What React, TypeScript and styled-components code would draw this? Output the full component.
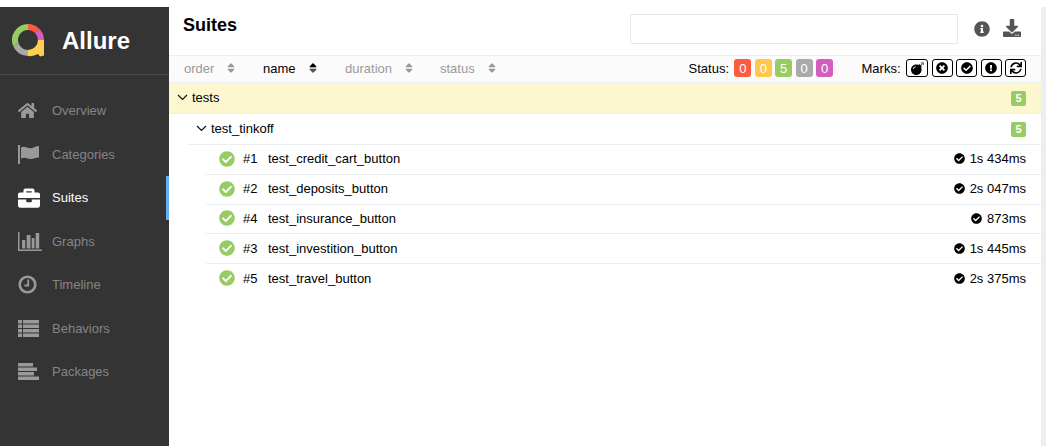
import React from 'react'
import styled, { createGlobalStyle } from 'styled-components'
import {
  FaHome,
  FaBriefcase,
  FaInfoCircle,
  FaDownload,
  FaBomb,
  FaTimesCircle,
  FaCheckCircle,
  FaExclamationCircle,
  FaSync,
  FaSort,
  FaSortUp,
  FaSortDown,
} from 'react-icons/fa'

const GlobalStyle = createGlobalStyle`
  html, body {
    margin: 0;
    padding: 0;
    height: 100%;
    background: #fff;
    overflow: hidden;
  }
  #root {
    height: 100%;
  }
  * {
    box-sizing: border-box;
  }
`

const Page = styled.div`
  display: flex;
  height: 446px;
  padding-top: 7px;
  font-family: 'Liberation Sans', Arial, sans-serif;
  font-size: 13px;
  color: #000;
`

const Side = styled.aside`
  width: 169px;
  flex: none;
  background: #343434;
  display: flex;
  flex-direction: column;
`

const Brand = styled.div`
  height: 68px;
  display: flex;
  align-items: center;
  padding-left: 12px;
  gap: 18px;
  border-bottom: 1px solid #4a4a4a;
  color: #fff;
  font-size: 24px;
  font-weight: 700;
`

const Menu = styled.nav`
  display: flex;
  flex-direction: column;
  padding-top: 14px;
`

const MenuItem = styled.div<{ $active?: boolean }>`
  height: 43.5px;
  display: flex;
  align-items: center;
  padding-left: 18px;
  color: ${(p) => (p.$active ? '#fff' : '#999')};
  border-right: 3px solid ${(p) => (p.$active ? '#63b0f0' : 'transparent')};
  svg {
    display: block;
  }
`

const MenuIcon = styled.span`
  width: 34px;
  height: 24px;
  flex: none;
  display: flex;
  align-items: center;
`

const MenuLabel = styled.span<{ $active?: boolean }>`
  color: ${(p) => (p.$active ? '#fff' : '#858585')};
`

const Main = styled.main`
  flex: 1;
  min-width: 0;
  display: flex;
  flex-direction: column;
`

const Header = styled.header`
  height: 48px;
  display: flex;
  align-items: flex-start;
  padding-left: 14px;
`

const Title = styled.h2`
  margin: 0;
  font-size: 18px;
  font-weight: 700;
  line-height: 36px;
  flex: 1;
`

const Search = styled.input`
  width: 328px;
  height: 30px;
  margin-top: 7px;
  border: 1px solid #e6e8ea;
  background: #fff;
  outline: none;
`

const HeaderIcons = styled.div`
  display: flex;
  align-items: center;
  gap: 13px;
  height: 27px;
  margin: 8px 20px 0 16px;
  color: #555;
  svg:last-child {
    margin-top: -2px;
  }
`

const SortBar = styled.div`
  height: 28px;
  display: flex;
  align-items: center;
  background: #fbfbfb;
  border-top: 1px solid #eceff1;
  border-bottom: 1px solid #eceff1;
  padding: 0 0 2px 15px;
`

const SortItem = styled.div<{ $active?: boolean; $width: number }>`
  width: ${(p) => p.$width}px;
  flex: none;
  display: flex;
  align-items: center;
  gap: 13px;
  color: ${(p) => (p.$active ? '#000' : '#999')};
`

const SortArrows = styled.span`
  position: relative;
  width: 8px;
  height: 12px;
  color: #999;
  svg {
    position: absolute;
    inset: 0;
    width: 100%;
    height: 100%;
  }
`

const Counts = styled.div`
  margin-left: auto;
  display: flex;
  align-items: center;
  gap: 3.4px;
`

const CountsLabel = styled.span`
  margin-right: 2px;
`

const Badge = styled.span<{ $color: string }>`
  width: 17px;
  height: 18px;
  border-radius: 3px;
  background: ${(p) => p.$color};
  color: #fff;
  display: flex;
  align-items: center;
  justify-content: center;
`

const Marks = styled.div`
  display: flex;
  align-items: center;
  gap: 3.5px;
  margin-left: 28.5px;
  margin-right: 15px;
`

const Mark = styled.span<{ $wide?: boolean }>`
  width: ${(p) => (p.$wide ? 22 : 21)}px;
  height: 18px;
  border: 1px solid #000;
  border-radius: 3px;
  background: #fff;
  display: flex;
  align-items: center;
  justify-content: center;
`

const GroupRow = styled.div<{ $selected?: boolean; $indent: number }>`
  height: 31px;
  display: flex;
  align-items: center;
  padding-left: 8px;
  padding-right: 15px;
  margin-left: ${(p) => p.$indent}px;
  background: ${(p) => (p.$selected ? '#fdf7cf' : '#fff')};
  border-bottom: 1px solid #eceff1;
  gap: 4px;
`

const GroupName = styled.span`
  flex: 1;
  margin-bottom: 2px;
`

const Chevron = styled.svg`
  width: 11px;
  height: 7px;
  flex: none;
  margin-bottom: 1px;
`

const CountBadge = styled.span`
  width: 15px;
  height: 15px;
  border-radius: 2px;
  background: #97cc64;
  color: #fff;
  font-size: 11px;
  font-weight: 700;
  display: flex;
  align-items: center;
  justify-content: center;
`

const TestList = styled.div`
  margin-left: 37px;
  display: flex;
  flex-direction: column;
`

const TestRow = styled.div`
  height: 29.75px;
  display: flex;
  align-items: center;
  padding: 0 15px 1px 13px;
  border-bottom: 1px solid #eceff1;
  &:last-child {
    border-bottom: none;
  }
`

const TestOrder = styled.span`
  margin-left: 8px;
  width: 25px;
`

const TestName = styled.span`
  flex: 1;
`

const Duration = styled.span`
  display: flex;
  align-items: center;
  gap: 5px;
`

const Rail = styled.div`
  width: 5px;
  flex: none;
  background: #eceff1;
`

const Logo = () => (
  <svg width="32" height="33" viewBox="0 0 32 33" fill="none">
    <path d="M16 3 A13 13 0 0 0 3.9 20.7" stroke="#97cc64" strokeWidth="6" />
    <path d="M3.9 20.7 A13 13 0 0 0 16 29" stroke="#aaa" strokeWidth="6" />
    <path d="M16 3 A13 13 0 0 1 25.2 6.8" stroke="#fd5a3e" strokeWidth="6" />
    <path d="M25.2 6.8 A13 13 0 0 1 29 16" stroke="#d35ebe" strokeWidth="6" />
    <path
      d="M16 26 A10 10 0 0 0 26 16 L32 16 L32 31.5 L28 32.5 L26 30 A16 16 0 0 1 16 32 Z"
      fill="#ffd050"
    />
  </svg>
)

const CategoryFlag = () => (
  <svg width="21" height="19" viewBox="0 0 21 19" fill="#999">
    <rect x="0" y="0" width="2" height="19" />
    <path d="M3 2.5 C7 0 10 4.5 14 3 C16 2.3 18 1 21 1 L21 12.5 C17 12.5 15 14.5 12 14 C9 13.5 7 11.5 3 13.5 Z" />
  </svg>
)

const GraphIcon = () => (
  <svg width="24" height="19" viewBox="0 0 24 19" fill="#999">
    <rect x="0" y="0" width="1.5" height="19" />
    <rect x="0" y="17.5" width="24" height="1.5" />
    <rect x="4" y="8" width="3.3" height="8.5" />
    <rect x="8.7" y="3" width="3.8" height="13.5" />
    <rect x="13.7" y="6" width="2.8" height="10.5" />
    <rect x="17.7" y="1" width="3.5" height="15.5" />
  </svg>
)

const ClockIcon = () => (
  <svg width="19" height="19" viewBox="0 0 19 19" fill="none" stroke="#999">
    <circle cx="9.5" cy="9.5" r="7.8" strokeWidth="2.6" />
    <path d="M10.2 4.5 V10.5 H6.5" strokeWidth="1.8" />
  </svg>
)

const BehaviorsIcon = () => (
  <svg width="21" height="17" viewBox="0 0 21 17" fill="#999">
    <rect x="0" y="0" width="4" height="3.5" />
    <rect x="5" y="0" width="16" height="3.5" />
    <rect x="0" y="4.5" width="4" height="3.5" />
    <rect x="5" y="4.5" width="16" height="3.5" />
    <rect x="0" y="9" width="4" height="3.5" />
    <rect x="5" y="9" width="16" height="3.5" />
    <rect x="0" y="13.5" width="4" height="3.5" />
    <rect x="5" y="13.5" width="16" height="3.5" />
  </svg>
)

const PackagesIcon = () => (
  <svg width="21" height="17" viewBox="0 0 21 17" fill="#999">
    <rect x="0" y="0" width="15" height="3.5" />
    <rect x="0" y="4.5" width="19" height="3.5" />
    <rect x="0" y="9" width="16" height="3.5" />
    <rect x="0" y="13.5" width="21" height="3.5" />
  </svg>
)

const ChevronDown = () => (
  <Chevron viewBox="0 0 11 7" fill="none" stroke="#111" strokeWidth="1.2">
    <path d="M1 1 L5.5 5.5 L10 1" />
  </Chevron>
)

const menu = [
  { label: 'Overview', icon: <FaHome size={19} /> },
  { label: 'Categories', icon: <CategoryFlag /> },
  { label: 'Suites', icon: <FaBriefcase size={22} />, active: true },
  { label: 'Graphs', icon: <GraphIcon /> },
  { label: 'Timeline', icon: <ClockIcon /> },
  { label: 'Behaviors', icon: <BehaviorsIcon /> },
  { label: 'Packages', icon: <PackagesIcon /> },
]

const sorts = [
  { label: 'order', width: 79 },
  { label: 'name', width: 82, active: true },
  { label: 'duration', width: 95 },
  { label: 'status', width: 70 },
]

const tests = [
  { order: '#1', name: 'test_credit_cart_button', time: '1s 434ms' },
  { order: '#2', name: 'test_deposits_button', time: '2s 047ms' },
  { order: '#4', name: 'test_insurance_button', time: '873ms' },
  { order: '#3', name: 'test_investition_button', time: '1s 445ms' },
  { order: '#5', name: 'test_travel_button', time: '2s 375ms' },
]

const statuses = [
  { value: 0, color: '#fd5a3e' },
  { value: 0, color: '#ffc84a' },
  { value: 5, color: '#97cc64' },
  { value: 0, color: '#aaaaaa' },
  { value: 0, color: '#d35ebe' },
]

const App = () => {
  return (
    <Page>
      <GlobalStyle />
      <Side>
        <Brand>
          <Logo />
          Allure
        </Brand>
        <Menu>
          {menu.map((m) => (
            <MenuItem key={m.label} $active={m.active}>
              <MenuIcon>{m.icon}</MenuIcon>
              <MenuLabel $active={m.active}>{m.label}</MenuLabel>
            </MenuItem>
          ))}
        </Menu>
      </Side>
      <Main>
        <Header>
          <Title>Suites</Title>
          <Search />
          <HeaderIcons>
            <FaInfoCircle size={16} />
            <FaDownload size={18} />
          </HeaderIcons>
        </Header>
        <SortBar>
          {sorts.map((s) => (
            <SortItem key={s.label} $active={s.active} $width={s.width}>
              {s.label}
              <SortArrows>
                <FaSort />
                {s.active && <FaSortDown color="#555" />}
                {s.active && <FaSortUp color="#000" />}
              </SortArrows>
            </SortItem>
          ))}
          <Counts>
            <CountsLabel>Status:</CountsLabel>
            {statuses.map((s, i) => (
              <Badge key={i} $color={s.color}>
                {s.value}
              </Badge>
            ))}
          </Counts>
          <Marks>
            <CountsLabel>Marks:</CountsLabel>
            <Mark $wide>
              <FaBomb size={13} />
            </Mark>
            <Mark>
              <FaTimesCircle size={12} />
            </Mark>
            <Mark>
              <FaCheckCircle size={12} />
            </Mark>
            <Mark>
              <FaExclamationCircle size={12} />
            </Mark>
            <Mark>
              <FaSync size={12} />
            </Mark>
          </Marks>
        </SortBar>
        <GroupRow $selected $indent={0}>
          <ChevronDown />
          <GroupName>tests</GroupName>
          <CountBadge>5</CountBadge>
        </GroupRow>
        <GroupRow $indent={19}>
          <ChevronDown />
          <GroupName>test_tinkoff</GroupName>
          <CountBadge>5</CountBadge>
        </GroupRow>
        <TestList>
          {tests.map((t) => (
            <TestRow key={t.order}>
              <FaCheckCircle size={16} color="#97cc64" />
              <TestOrder>{t.order}</TestOrder>
              <TestName>{t.name}</TestName>
              <Duration>
                <FaCheckCircle size={11} />
                {t.time}
              </Duration>
            </TestRow>
          ))}
        </TestList>
      </Main>
      <Rail />
    </Page>
  )
}

export default App
